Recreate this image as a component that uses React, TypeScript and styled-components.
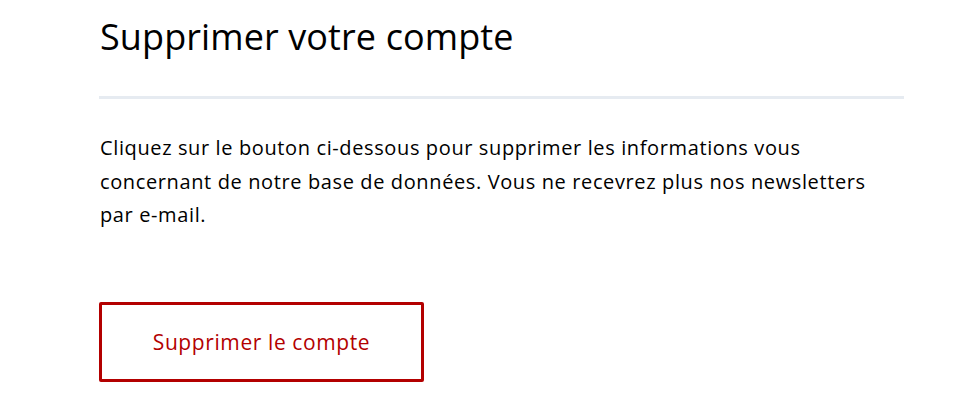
import styled, { createGlobalStyle } from 'styled-components';

const GlobalStyle = createGlobalStyle`
  html, body {
    margin: 0;
    padding: 0;
    background: #ffffff;
  }
  body {
    font-family: 'Open Sans', 'Noto Sans', sans-serif;
    color: #000000;
  }
`;

const Page = styled.div`
  width: 972px;
  height: 420px;
  box-sizing: border-box;
  padding: 15px 0 0 99px;
  overflow: hidden;
`;

const Section = styled.section`
  width: 805px;
  display: flex;
  flex-direction: column;
  align-items: flex-start;
`;

const Title = styled.h1`
  margin: 0 0 0 1px;
  font-size: 36px;
  font-weight: 400;
  line-height: 44px;
  letter-spacing: 0.1px;
  color: #000;
`;

const Divider = styled.hr`
  align-self: stretch;
  margin: 37px 0 0;
  border: 0;
  height: 3px;
  background: #e6ebf1;
`;

const Text = styled.p`
  margin: 32px 0 0 1px;
  font-size: 20px;
  line-height: 33.5px;
  letter-spacing: 0.62px;
  max-width: 790px;
`;

const DeleteButton = styled.button`
  margin-top: 70px;
  width: 325px;
  height: 80px;
  box-sizing: border-box;
  border: 3px solid #b30000;
  border-radius: 2px;
  background: #fff;
  color: #b30000;
  font-family: inherit;
  font-size: 21px;
  letter-spacing: 0.6px;
  cursor: pointer;
`;

export default function App() {
  return (
    <>
      <GlobalStyle />
      <Page>
        <Section>
          <Title>Supprimer votre compte</Title>
          <Divider />
          <Text>
            Cliquez sur le bouton ci-dessous pour supprimer les informations vous
            concernant de notre base de données. Vous ne recevrez plus nos newsletters
            par e-mail.
          </Text>
          <DeleteButton>Supprimer le compte</DeleteButton>
        </Section>
      </Page>
    </>
  );
}
